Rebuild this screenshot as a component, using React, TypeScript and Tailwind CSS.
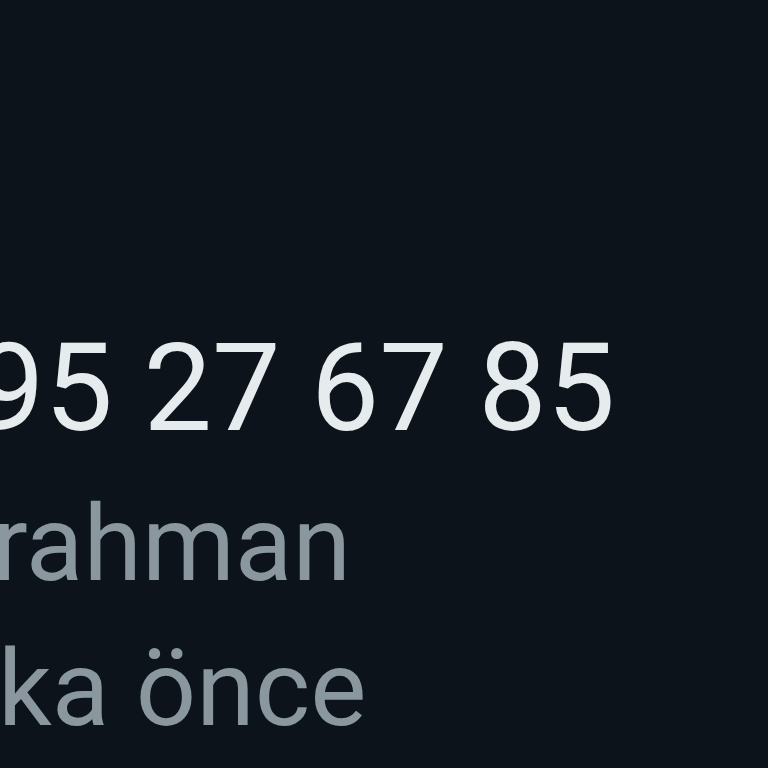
export default function App() {
  return (
    <div className="h-[768px] w-[768px] overflow-hidden bg-[#0c131b] font-['Roboto','Noto_Sans',sans-serif]">
      <div className="flex flex-col pt-[328px]">
        <div className="ml-[-24px] whitespace-nowrap text-[122px] leading-[122px] text-[#e6ebee]">95 27 67 85</div>
        <div className="ml-[-8px] mt-[41px] whitespace-nowrap text-[106px] leading-[106px] text-[#8a979f]">rahman</div>
        <div className="ml-[-2px] mt-[39px] whitespace-nowrap text-[106px] leading-[106px] text-[#8a979f]">ka önce</div>
      </div>
    </div>
  );
}
